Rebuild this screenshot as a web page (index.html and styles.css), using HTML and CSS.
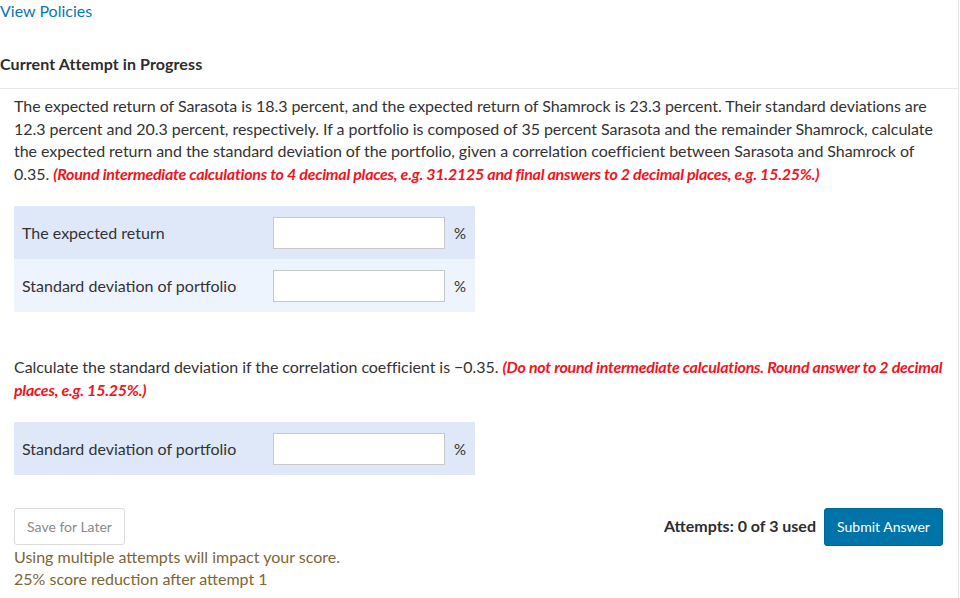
FILE: index.html
```html
<!DOCTYPE html>
<html>
<head>
<meta charset="utf-8">
<link rel="stylesheet" href="styles.css">
</head>
<body>
<div class="page">
  <div class="top">
    <a class="policies" href="#">View Policies</a>
    <h2 class="attempt-title">Current Attempt in Progress</h2>
  </div>
  <div class="question">
    <p class="text">The expected return of Sarasota is 18.3 percent, and the expected return of Shamrock is 23.3 percent. Their standard deviations are 12.3 percent and 20.3 percent, respectively. If a portfolio is composed of 35 percent Sarasota and the remainder Shamrock, calculate the expected return and the standard deviation of the portfolio, given a correlation coefficient between Sarasota and Shamrock of 0.35. <em class="hint">(Round intermediate calculations to 4 decimal places, e.g. 31.2125 and final answers to 2 decimal places, e.g. 15.25%.)</em></p>
    <div class="table">
      <div class="row dark"><span class="label">The expected return</span><span class="input"></span><span class="unit">%</span></div>
      <div class="row light"><span class="label">Standard deviation of portfolio</span><span class="input"></span><span class="unit">%</span></div>
    </div>
    <p class="text second">Calculate the standard deviation if the correlation coefficient is −0.35. <em class="hint">(Do not round intermediate calculations. Round answer to 2 decimal places, e.g. 15.25%.)</em></p>
    <div class="table">
      <div class="row dark"><span class="label">Standard deviation of portfolio</span><span class="input"></span><span class="unit">%</span></div>
    </div>
    <div class="actions">
      <div class="left">
        <button class="save">Save for Later</button>
        <p class="warn">Using multiple attempts will impact your score.<br>25% score reduction after attempt 1</p>
      </div>
      <div class="right">
        <span class="attempts">Attempts: 0 of 3 used</span>
        <button class="submit">Submit Answer</button>
      </div>
    </div>
  </div>
</div>
</body>
</html>
```
FILE: styles.css
```css
html, body {
  margin: 0;
  padding: 0;
  background: #fff;
}
body {
  font-family: Lato, "Open Sans", sans-serif;
  color: #333;
  font-size: 16px;
}
.page {
  width: 958px;
  height: 598px;
  border-right: 1px solid #e6e6e6;
  box-sizing: content-box;
}
.top {
  border-bottom: 1px solid #e6e6e6;
  padding-bottom: 13px;
}
.policies {
  display: block;
  color: #0a77b0;
  text-decoration: none;
  font-size: 16px;
  line-height: 22px;
}
.attempt-title {
  margin: 31px 0 0 0;
  font-size: 16px;
  font-weight: 700;
  line-height: 22px;
  color: #2d2d2d;
  letter-spacing: 0.1px;
}
.question {
  padding: 0 14px;
}
.text {
  margin: 6px 0 0 0;
  line-height: 22.5px;
  font-size: 16px;
  color: #333;
  letter-spacing: -0.05px;
}
.hint {
  color: #f0141e;
  font-weight: 700;
  font-style: italic;
  letter-spacing: -0.25px;
}
.table {
  width: 461px;
  margin-top: 21px;
}
.row {
  display: flex;
  align-items: center;
  height: 53px;
  padding-left: 8px;
}
.row.dark { background: #dee8f8; }
.row.light { background: #eef4fd; }
.label {
  width: 251px;
  font-size: 16px;
}
.input {
  width: 170px;
  height: 30px;
  background: #fff;
  border: 1px solid #c9c9c9;
  box-sizing: content-box;
}
.unit {
  margin-left: 9px;
  font-size: 15px;
}
.second {
  margin-top: 44px;
}
.actions {
  display: flex;
  justify-content: space-between;
  align-items: flex-start;
  margin-top: 33px;
}
.save {
  font-family: Lato, sans-serif;
  font-size: 14px;
  color: #8a8a8a;
  background: #fff;
  border: 1px solid #dcdcdc;
  border-radius: 3px;
  width: 111px;
  height: 37px;
  padding: 0;
  display: block;
}
.warn {
  margin: 1px 0 0 0;
  color: #7d6637;
  line-height: 22px;
  font-size: 16px;
}
.right {
  display: flex;
  align-items: center;
  gap: 8px;
  margin-right: 1px;
  margin-top: 0;
}
.attempts {
  font-weight: 700;
  font-size: 16px;
  color: #2d2d2d;
  margin-top: -4px;
}
.submit {
  font-family: Lato, sans-serif;
  font-size: 14px;
  color: #fff;
  background: #0074a8;
  border: 1px solid #006694;
  border-radius: 3px;
  width: 119px;
  height: 38px;
  padding: 0;
  line-height: 36px;
}
```
